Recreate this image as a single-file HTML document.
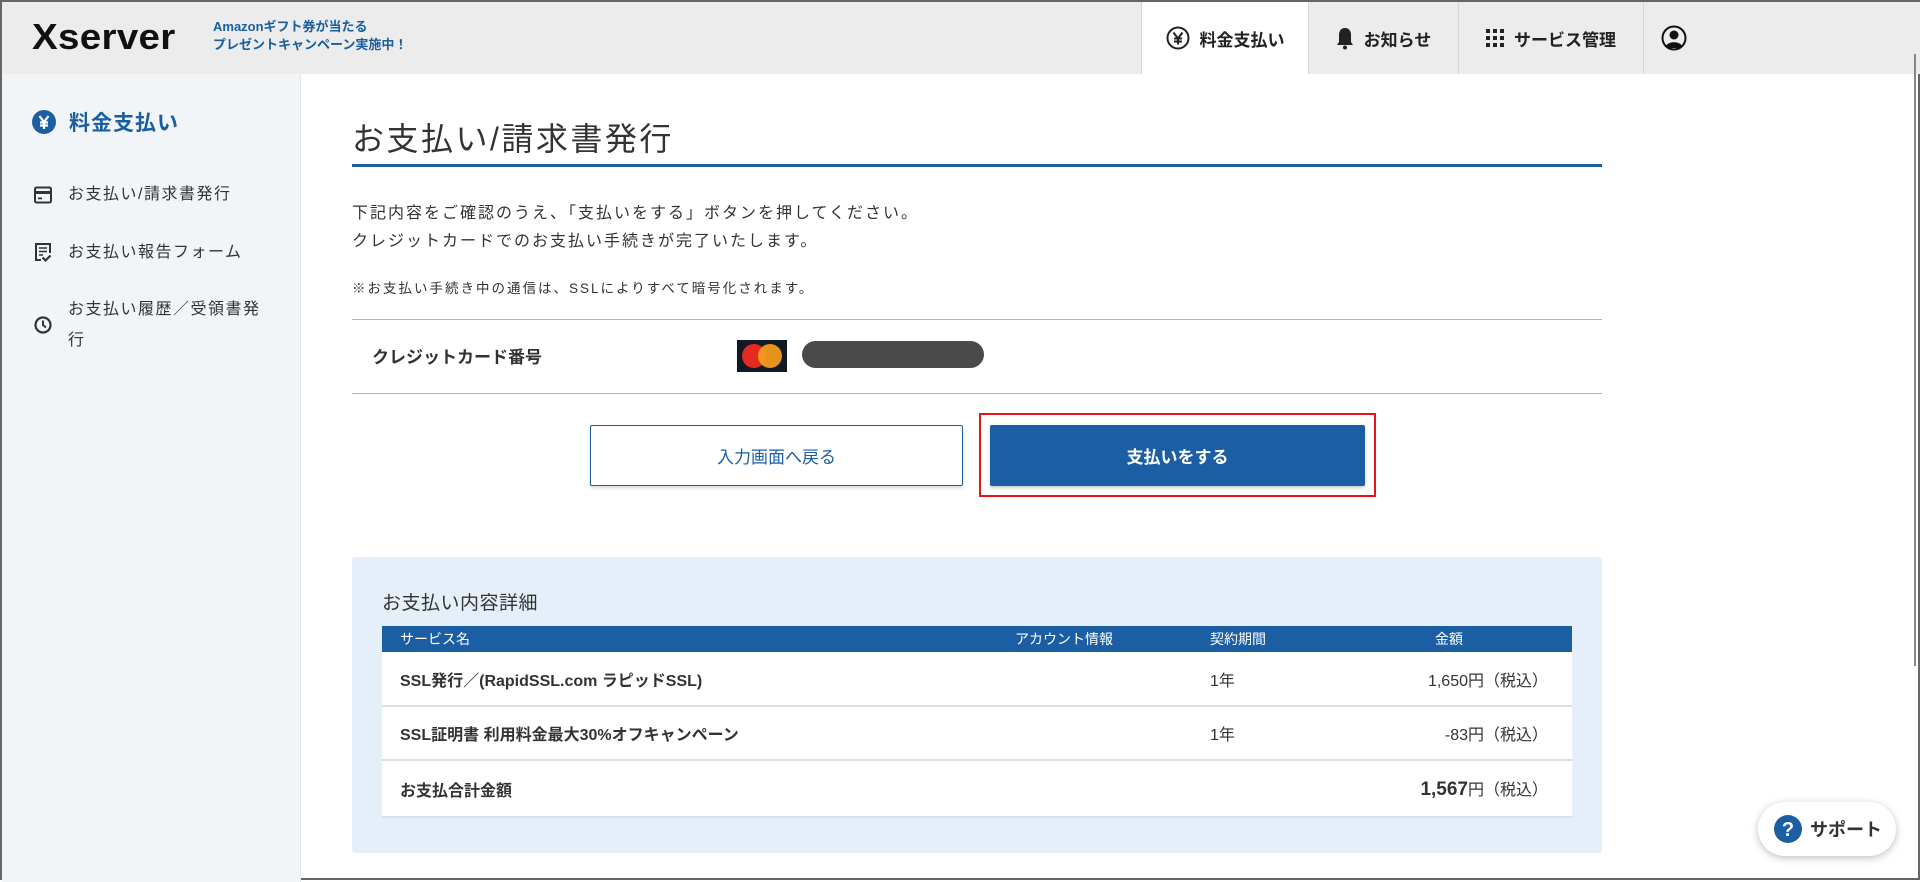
<!DOCTYPE html>
<html><head><meta charset="utf-8">
<style>
*{box-sizing:border-box;margin:0;padding:0}
body{width:1920px;height:880px;overflow:hidden;background:#fff;font-family:"Liberation Sans","Noto Sans CJK JP",sans-serif;color:#333;position:relative;border:2px solid #666}
.hdr{position:absolute;left:0;top:0;width:1920px;height:72px;background:#ececec;}
.logo{position:absolute;left:30px;top:14px;font-size:36px;font-weight:bold;color:#111;letter-spacing:0.3px;transform:scaleX(1.07);transform-origin:left}
.promo{position:absolute;left:211px;top:16px;font-size:13px;font-weight:bold;color:#1a5ea0;line-height:18px}
.tab{position:absolute;top:0;height:72px;display:flex;align-items:center;font-size:17px;font-weight:bold;color:#222;border-left:1px solid #d6d6d6}
.side{position:absolute;left:0;top:72px;width:299px;height:808px;background:#f2f5f8;border-right:1px solid #e2e6ea}
.side .t{position:absolute;left:30px;top:33px;font-size:21px;font-weight:bold;color:#1a5ea0;display:flex;align-items:center;gap:13px;letter-spacing:1px}
.si{position:absolute;left:32px;font-size:16px;color:#333;display:flex;align-items:center;gap:16px;line-height:31px;letter-spacing:1.5px}
h1{position:absolute;left:350px;top:112px;font-size:32px;font-weight:normal;color:#333;letter-spacing:2.5px}
.bl{position:absolute;left:350px;top:162px;width:1250px;height:3px;background:#1b5ea3}
.p{position:absolute;left:350px;font-size:16px;color:#333}
.hl{position:absolute;left:350px;width:1250px;height:1px;background:#a8b8c8}
.btn{position:absolute;top:423px;height:61px;display:flex;align-items:center;justify-content:center;font-size:17px;border-radius:2px}
.box{position:absolute;left:350px;top:555px;width:1250px;height:296px;background:#e5eff9;border-radius:3px}
table{position:absolute;left:380px;top:624px;width:1190px;border-collapse:collapse;font-size:16px;table-layout:fixed}
th{background:#1b5ea3;color:#fff;font-weight:normal;font-size:14px;height:26px;text-align:left;padding:0 18px}
td{background:#fff;height:54px;border-bottom:2px solid #d8e0e8;padding:0 18px;color:#333;white-space:nowrap}
td.r{text-align:right;padding-right:24px}
.support{position:absolute;left:1756px;top:800px;width:138px;height:54px;background:#fff;border-radius:27px;box-shadow:0 2px 8px rgba(0,0,0,.25);display:flex;align-items:center;gap:8px;padding-left:16px;font-size:18px;font-weight:bold;color:#333}
</style></head><body>
<div class="hdr">
 <div class="logo">Xserver</div>
 <div class="promo">Amazonギフト券が当たる<br>プレゼントキャンペーン実施中！</div>
 <div class="tab" style="left:1139px;width:167px;background:#fff;justify-content:center;gap:10px">
  <svg width="24" height="24" viewBox="0 0 24 24"><circle cx="12" cy="12" r="10.5" fill="none" stroke="#222" stroke-width="2"/><path d="M7.5 6.5l4.5 6 4.5-6M12 12.5v6M8 12.5h8M8 15.5h8" fill="none" stroke="#222" stroke-width="2"/></svg>料金支払い</div>
 <div class="tab" style="left:1306px;width:150px;justify-content:center;gap:10px">
  <svg width="18" height="24" viewBox="0 0 18 24"><path d="M9 2c-4 0-6 3-6 7v7l-2 3h16l-2-3V9c0-4-2-7-6-7z" fill="#222"/><circle cx="9" cy="21.5" r="2" fill="#222"/></svg>お知らせ</div>
 <div class="tab" style="left:1456px;width:185px;justify-content:center;gap:10px">
  <svg width="18" height="18" viewBox="0 0 18 18" fill="#222"><rect x="0" y="0" width="4" height="4"/><rect x="7" y="0" width="4" height="4"/><rect x="14" y="0" width="4" height="4"/><rect x="0" y="7" width="4" height="4"/><rect x="7" y="7" width="4" height="4"/><rect x="14" y="7" width="4" height="4"/><rect x="0" y="14" width="4" height="4"/><rect x="7" y="14" width="4" height="4"/><rect x="14" y="14" width="4" height="4"/></svg>サービス管理</div>
 <div class="tab" style="left:1641px;width:60px;justify-content:center">
  <svg width="26" height="26" viewBox="0 0 26 26"><circle cx="13" cy="13" r="11.5" fill="none" stroke="#111" stroke-width="2"/><circle cx="13" cy="10" r="4.5" fill="#111"/><path d="M5 21c2-5 14-5 16 0l-3 2H8z" fill="#111"/></svg></div>
</div>
<div style="position:absolute;left:1912px;top:52px;width:2px;height:612px;background:#888"></div>
<div class="side">
 <div class="t"><svg width="24" height="24" viewBox="0 0 24 24"><circle cx="12" cy="12" r="12" fill="#1b5ea3"/><path d="M7.5 6l4.5 6 4.5-6M12 12v7M8 12.5h8M8 15.5h8" fill="none" stroke="#fff" stroke-width="2.2"/></svg>料金支払い</div>
 <div class="si" style="top:105px"><svg width="18" height="18" viewBox="0 0 18 18"><rect x="1" y="1.5" width="16" height="15" rx="1.5" fill="none" stroke="#333" stroke-width="2"/><rect x="1" y="5" width="16" height="3" fill="#333"/><rect x="4" y="11.5" width="4" height="1.8" fill="#333"/></svg>お支払い/請求書発行</div>
 <div class="si" style="top:163px"><svg width="18" height="20" viewBox="0 0 18 20"><path d="M7 17H2V1h14v9" fill="none" stroke="#333" stroke-width="2"/><path d="M5 5h8M5 8.5h8M5 12h4" stroke="#333" stroke-width="1.6"/><path d="M8.5 14.5l3 3 5-5" fill="none" stroke="#333" stroke-width="2.2"/></svg>お支払い報告フォーム</div>
 <div class="si" style="top:220px;align-items:center"><svg width="18" height="18" viewBox="0 0 18 18"><circle cx="9" cy="9" r="7.5" fill="none" stroke="#333" stroke-width="2.2"/><path d="M9 4.5V9l3 2.5" fill="none" stroke="#333" stroke-width="2"/></svg><div>お支払い履歴／受領書発<br>行</div></div>
</div>
<h1>お支払い/請求書発行</h1>
<div class="bl"></div>
<div class="p" style="top:198px;line-height:28px;letter-spacing:2px">下記内容をご確認のうえ、「支払いをする」ボタンを押してください。<br>クレジットカードでのお支払い手続きが完了いたします。</div>
<div class="p" style="top:275px;font-size:13.5px;letter-spacing:2px">※お支払い手続き中の通信は、SSLによりすべて暗号化されます。</div>
<div class="hl" style="top:317px"></div>
<div class="p" style="left:370px;top:341px;font-size:17px;font-weight:bold">クレジットカード番号</div>
<div style="position:absolute;left:735px;top:338px;width:50px;height:32px;background:#111a24"><div style="position:absolute;left:5px;top:4px;width:24px;height:24px;border-radius:50%;background:#e52a1f"></div><div style="position:absolute;left:21px;top:4px;width:24px;height:24px;border-radius:50%;background:#f79e1b;opacity:.92"></div></div>
<div style="position:absolute;left:800px;top:339px;width:182px;height:27px;border-radius:14px;background:#4a4a4a"></div>
<div class="hl" style="top:391px"></div>
<div class="btn" style="left:588px;width:373px;border:1.5px solid #1b5ea3;color:#1b5ea3;background:#fff;box-shadow:0 2px 3px rgba(0,0,0,.15)">入力画面へ戻る</div>
<div style="position:absolute;left:977px;top:411px;width:397px;height:84px;border:2px solid #e8141b"></div>
<div class="btn" style="left:988px;width:375px;background:#1b5ea3;color:#fff;font-weight:bold;box-shadow:0 2px 3px rgba(0,0,0,.2)">支払いをする</div>
<div class="box"></div>
<div class="p" style="left:380px;top:586px;font-size:19px;color:#333;letter-spacing:0.5px">お支払い内容詳細</div>
<table>
<tr><th style="width:615px">サービス名</th><th style="width:195px">アカウント情報</th><th style="width:160px">契約期間</th><th style="padding-left:83px">金額</th></tr>
<tr><td style="font-weight:bold">SSL発行／(RapidSSL.com ラピッドSSL)</td><td></td><td>1年</td><td class="r">1,650円（税込）</td></tr>
<tr><td style="font-weight:bold">SSL証明書 利用料金最大30%オフキャンペーン</td><td></td><td>1年</td><td class="r">-83円（税込）</td></tr>
<tr><td style="font-weight:bold;height:57px">お支払合計金額</td><td></td><td></td><td class="r"><b style="font-size:19px">1,567</b>円（税込）</td></tr>
</table>
<div class="support"><svg width="28" height="28" viewBox="0 0 28 28"><circle cx="14" cy="14" r="14" fill="#1b5ea3"/><text x="14" y="21" font-size="20" font-weight="bold" fill="#fff" text-anchor="middle" font-family="Liberation Sans">?</text></svg>サポート</div>
</body></html>
